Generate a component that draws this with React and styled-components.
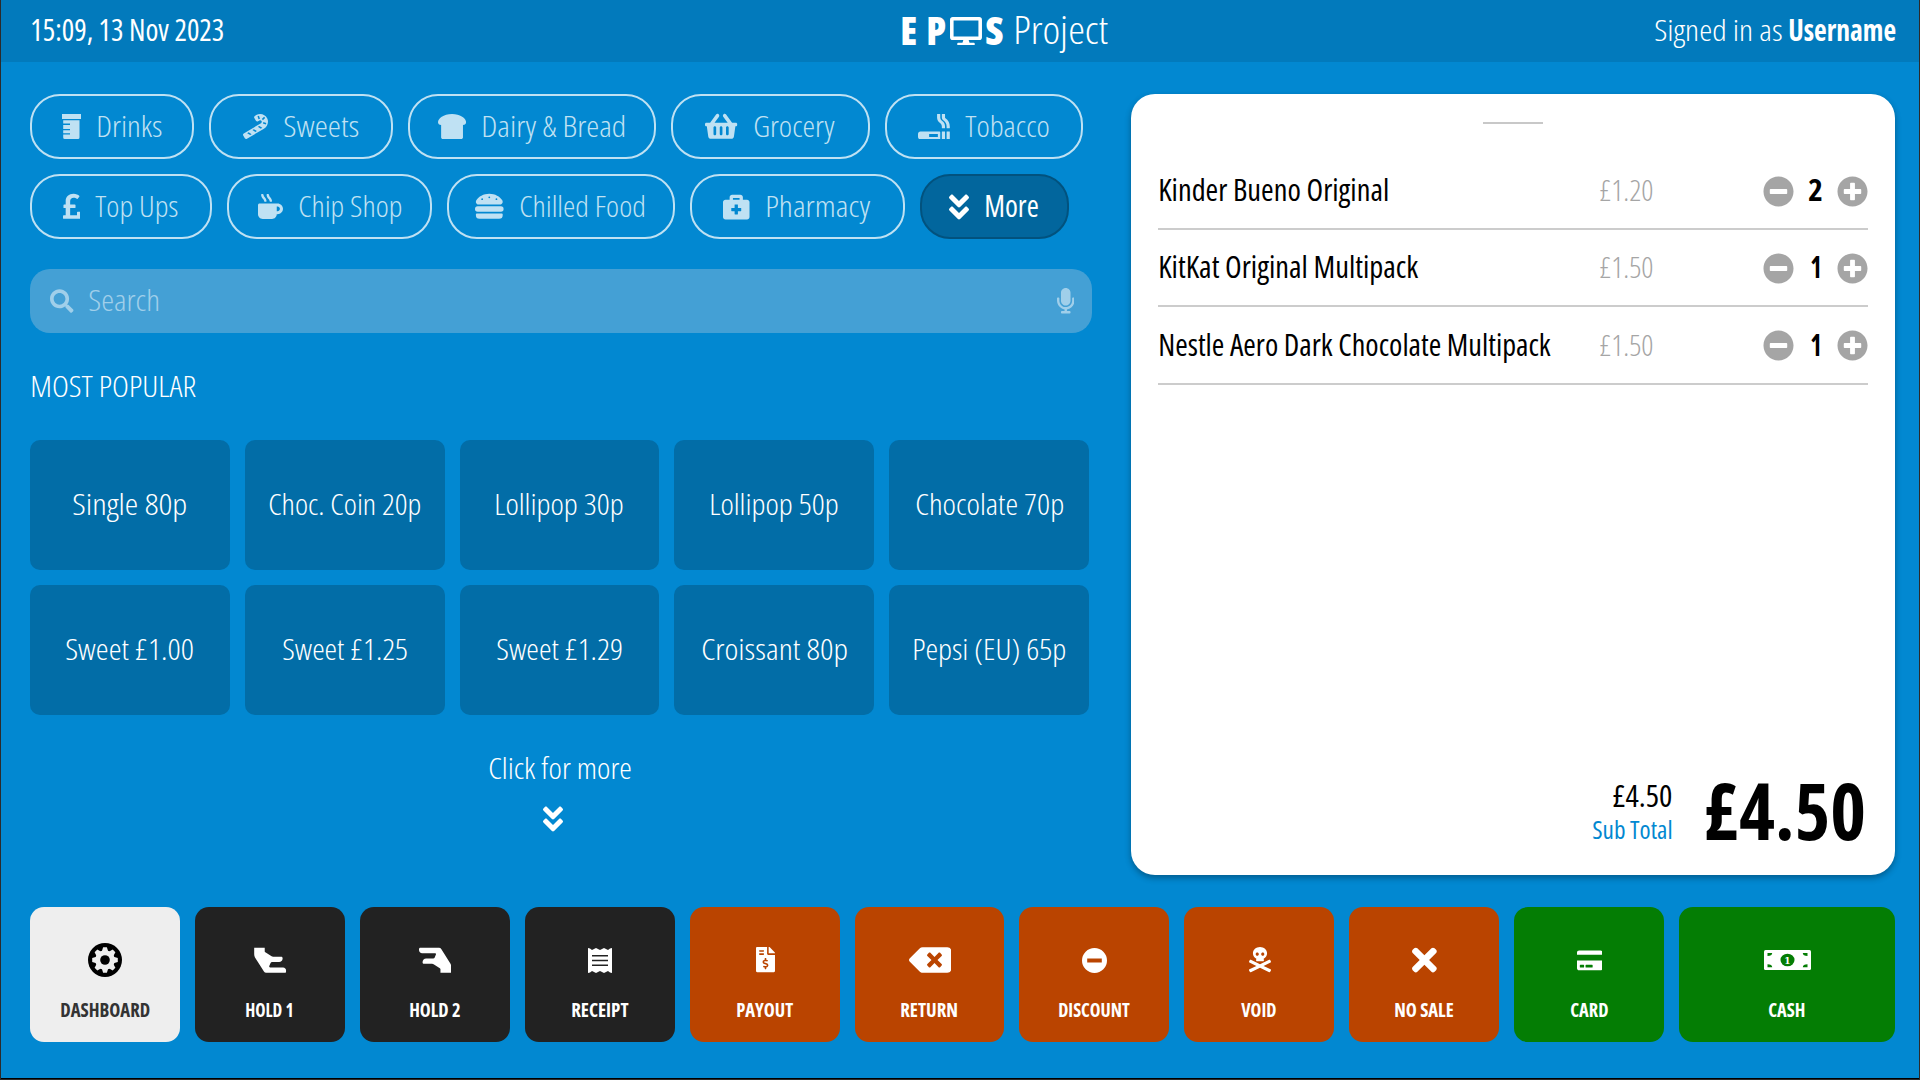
import React, { useLayoutEffect, useRef, useState } from "react";
import styled, { createGlobalStyle, css } from "styled-components";
import {
  FaCandyCane, FaBreadSlice, FaShoppingBasket, FaSmoking, FaPoundSign, FaMugHot,
  FaHamburger, FaBriefcaseMedical, FaAngleDoubleDown, FaMicrophone, FaDesktop,
  FaMinusCircle, FaPlusCircle, FaHandLizard, FaFileInvoiceDollar, FaBackspace,
  FaSkullCrossbones, FaTimes, FaCreditCard, FaSearch,
} from "react-icons/fa";

const GlobalStyle = createGlobalStyle`
  * { box-sizing: border-box; }
  body {
    margin: 0;
    overflow: hidden;
    background: #0288d1;
    font-family: "Open Sans", "Noto Sans", sans-serif;
    font-stretch: 75%;
  }
  button { font: inherit; font-stretch: inherit; color: inherit; }
`;

/* ---------- condensed text ---------- */

const TextBox = styled.span`
  display: inline-flex;
  flex: none;
  justify-content: flex-start;
  width: ${(p) => p.$w}px;
  height: ${(p) => p.$size * 1.2}px;
  line-height: ${(p) => p.$size * 1.2 - (p.$size > 20 ? 2 : 0)}px;
  font-size: ${(p) => p.$size}px;
  font-weight: ${(p) => p.$weight};
  color: ${(p) => p.$color || "inherit"};
  white-space: nowrap;
`;

const TextRun = styled.span`
  flex: none;
  transform-origin: 0 50%;
`;

function Text({ w, size = 30, weight = 300, color, children }) {
  const run = useRef(null);
  const [scale, setScale] = useState(1);
  const bleed = 0.8;
  useLayoutEffect(() => {
    const fit = () => {
      if (run.current) setScale((w + bleed * 2) / run.current.offsetWidth);
    };
    fit();
    document.fonts.ready.then(fit);
  }, [w, children]);
  return (
    <TextBox $w={w} $size={size} $weight={weight} $color={color}>
      <TextRun ref={run} style={{ transform: `translateX(${-bleed}px) scaleX(${scale})` }}>
        {children}
      </TextRun>
    </TextBox>
  );
}

/* ---------- icons ---------- */

const Glyph = styled.span`
  display: inline-flex;
  flex: none;
  align-items: center;
  svg {
    display: block;
    width: ${(p) => p.$w}px;
    height: ${(p) => p.$h}px;
    ${(p) => p.$flip && css`transform: rotate(180deg);`}
  }
`;

const Beaker = () => (
  <svg viewBox="0 0 19 25" fill="currentColor">
    <path d="M0 0h19v5H0z" />
    <path d="M1.2 6.2h16.3V23.5a1.5 1.5 0 0 1-1.5 1.5H2.7a1.5 1.5 0 0 1-1.5-1.5V20.6H8v-1.3H1.2v-3H8V15H1.2v-4H8V9.6H1.2z" />
  </svg>
);

const TEETH = [0, 45, 90, 135, 180, 225, 270, 315];
const Gear = () => (
  <svg viewBox="-17 -17 34 34">
    <circle r="17" fill="#000" />
    <g fill="#eee">
      <circle r="9.8" />
      {TEETH.map((a) => (
        <path key={a} transform={`rotate(${a})`} d="M-3.2 -8.5L-1.9 -12.8H1.9L3.2 -8.5z" />
      ))}
    </g>
    <circle r="4.8" fill="#000" />
  </svg>
);

const Receipt = () => (
  <svg viewBox="0 0 24 25" fill="currentColor">
    <path
      fillRule="evenodd"
      d="M0 0l2 .6L4 2l4-2 4 2 4-2 4 2 2-1.4L24 0v25l-2-.6L20 23l-4 2-4-2-4 2-4-2-2 1.4L0 25zM4 7v1.5h16V7zM4 11.7v1.5h16v-1.5zM4 16.4v1.5h16v-1.5z"
    />
  </svg>
);

const Remove = () => (
  <svg viewBox="0 0 25 25" fill="currentColor">
    <path fillRule="evenodd" d="M12.5 0a12.5 12.5 0 1 0 0 25a12.5 12.5 0 0 0 0-25zM5.2 10.5h14.6v4H5.2z" />
  </svg>
);

const Banknote = () => (
  <svg viewBox="0 0 47 20">
    <rect width="47" height="20" rx="1.5" fill="currentColor" />
    <g fill="#047d04">
      <path d="M3.5 3H8.2A4.7 3 0 0 1 3.5 6z" />
      <path d="M43.5 3H38.8A4.7 3 0 0 0 43.5 6z" />
      <path d="M3.5 17.3H8.2A4.7 3 0 0 0 3.5 14.3z" />
      <path d="M43.5 17.3H38.8A4.7 3 0 0 1 43.5 14.3z" />
      <ellipse cx="23.5" cy="10" rx="7" ry="6.3" />
    </g>
    <text x="23.5" y="13.7" textAnchor="middle" fontFamily="DejaVu Serif" fontWeight="700" fontSize="10" fill="currentColor">
      1
    </text>
  </svg>
);

/* ---------- page ---------- */

const Screen = styled.div`
  width: 1920px;
  height: 1080px;
  display: flex;
  flex-direction: column;
  background: #0288d1;
  color: #fff;
  border: solid #2b2b2b;
  border-width: 0 1px 1px;
  box-shadow: inset 0 -1px 0 #000;
`;

const Header = styled.header`
  flex: none;
  height: 62px;
  padding: 0 24px 0 30px;
  display: grid;
  grid-template-columns: 870px 1fr auto;
  align-items: center;
  background: #027abc;
`;

const Brand = styled.div`
  display: flex;
  align-items: center;
`;

const BrandMark = styled.div`
  display: flex;
  align-items: center;
  gap: ${(p) => p.$gap}px;
  margin-right: ${(p) => p.$end}px;
`;

const User = styled.div`
  display: flex;
  gap: 7px;
`;

const Main = styled.main`
  flex: none;
  display: grid;
  grid-template-columns: 1062px 764px;
  justify-content: space-between;
  height: 813px;
  padding: 32px 24px 0 29px;
`;

const Catalogue = styled.section`
  display: flex;
  flex-direction: column;
`;

const CategoryRow = styled.div`
  display: flex;
  gap: 15px;
  margin-bottom: 15px;
`;

const Category = styled.button`
  display: flex;
  align-items: center;
  justify-content: center;
  gap: 16px;
  width: ${(p) => p.$w}px;
  height: 65px;
  padding: 0 1px 0 0;
  border: 2px solid ${(p) => (p.$active ? "#02527e" : "#bfe1f3")};
  border-radius: 30px;
  background: ${(p) => (p.$active ? "#02669d" : "transparent")};
  color: ${(p) => (p.$active ? "#fff" : "#bfe1f3")};
`;

const SearchBar = styled.div`
  display: flex;
  align-items: center;
  gap: 15px;
  height: 64px;
  margin-top: 15px;
  padding: 0 18px 0 20px;
  border-radius: 20px;
  background: #44a0d5;
  color: #a0cfea;
`;

const Spacer = styled.span`
  flex: 1;
`;

const SectionTitle = styled.div`
  display: flex;
  margin: 36px 0 0 1px;
  height: 36px;
`;

const TileGrid = styled.div`
  display: grid;
  grid-template-columns: repeat(5, 1fr);
  grid-auto-rows: 130px;
  gap: 15px;
  width: 1059px;
  margin-top: 35px;
`;

const Tile = styled.button`
  display: flex;
  align-items: center;
  justify-content: center;
  padding: 0;
  border: 0;
  border-radius: 10px;
  background: #026da7;
`;

const MoreLink = styled.div`
  display: flex;
  flex-direction: column;
  align-items: center;
  gap: 16px;
  width: 1059px;
  margin-top: 36px;
`;

const MoreArrow = styled.span`
  display: flex;
  margin-right: 14px;
`;

const Basket = styled.section`
  display: flex;
  flex-direction: column;
  padding: 28px 27px 26px;
  border-radius: 24px;
  background: #fff;
  color: #000;
  box-shadow: 0 3px 6px rgba(0, 0, 0, 0.32);
`;

const Handle = styled.div`
  align-self: center;
  width: 60px;
  height: 2px;
  margin-bottom: 28.4px;
  background: #c8c8c8;
`;

const Line = styled.div`
  display: grid;
  grid-template-columns: 441px 1fr auto;
  align-items: center;
  height: 77.4px;
  padding: 2px 0 0 1px;
  border-bottom: 2px solid #ccc;
`;

const Stepper = styled.div`
  display: flex;
  align-items: center;
  color: #a5a5a5;
`;

const Quantity = styled.span`
  display: flex;
  justify-content: center;
  width: 43px;
`;

const Totals = styled.div`
  display: flex;
  align-items: flex-end;
  justify-content: flex-end;
  gap: 32px;
  margin-top: auto;
  padding-right: 3px;
`;

const SubTotal = styled.div`
  display: flex;
  flex-direction: column;
  align-items: flex-end;
  padding-bottom: 4px;
`;

const GrandTotal = styled.div`
  display: flex;
  margin-bottom: -10px;
`;

const Actions = styled.footer`
  display: flex;
  gap: 15px;
  height: 135px;
  margin-top: 32px;
  padding: 0 24px 0 29px;
`;

const tones = {
  light: css`background: #eee; color: #333;`,
  dark: css`background: #222; color: #fff;`,
  orange: css`background: #ba4400; color: #fff;`,
  green: css`background: #047d04; color: #fff;`,
};

const Action = styled.button`
  flex: ${(p) => (p.$wide ? "0 0 216px" : "1 1 0")};
  display: flex;
  flex-direction: column;
  align-items: center;
  padding: 33px 0 0;
  border: 0;
  border-radius: 14px;
  ${(p) => tones[p.$tone]}
`;

const ActionIcon = styled.span`
  display: flex;
  align-items: center;
  height: 40px;
  margin-bottom: 18px;
  padding-left: 1px;
`;

const categories = [
  [
    { label: "Drinks", w: 164, tw: 65, Icon: Beaker, iw: 19, h: 25 },
    { label: "Sweets", w: 184, tw: 75, Icon: FaCandyCane, iw: 25, h: 25 },
    { label: "Dairy & Bread", w: 247.5, tw: 143, Icon: FaBreadSlice, iw: 28.1, h: 25 },
    { label: "Grocery", w: 199, tw: 80, Icon: FaShoppingBasket, iw: 32.2, h: 28.6 },
    { label: "Tobacco", w: 198.5, tw: 83, Icon: FaSmoking, iw: 31.8, h: 25.5 },
  ],
  [
    { label: "Top Ups", w: 182, tw: 82, Icon: FaPoundSign, iw: 17.9, h: 28.6 },
    { label: "Chip Shop", w: 205, tw: 102, Icon: FaMugHot, iw: 25, h: 25 },
    { label: "Chilled Food", w: 227.5, tw: 125, Icon: FaHamburger, iw: 28.6, h: 28.6 },
    { label: "Pharmacy", w: 215, tw: 104, Icon: FaBriefcaseMedical, iw: 26.5, h: 26.5 },
    { label: "More", w: 149.5, tw: 53, Icon: FaAngleDoubleDown, iw: 20, h: 32, active: true },
  ],
];

const tiles = [
  ["Single 80p", 113], ["Choc. Coin 20p", 151], ["Lollipop 30p", 128], ["Lollipop 50p", 128],
  ["Chocolate 70p", 147], ["Sweet £1.00", 127], ["Sweet £1.25", 124], ["Sweet £1.29", 125],
  ["Croissant 80p", 145], ["Pepsi (EU) 65p", 153],
];

const lines = [
  { name: "Kinder Bueno Original", w: 229, price: "£1.20", qty: "2", qw: 13 },
  { name: "KitKat Original Multipack", w: 258, price: "£1.50", qty: "1", qw: 10 },
  { name: "Nestle Aero Dark Chocolate Multipack", w: 391, price: "£1.50", qty: "1", qw: 10 },
];

const actions = [
  { label: "DASHBOARD", w: 88, tone: "light", Icon: Gear, iw: 34, h: 34 },
  { label: "HOLD 1", w: 47, tone: "dark", Icon: FaHandLizard, iw: 32.2, h: 28.6, flip: true },
  { label: "HOLD 2", w: 50, tone: "dark", Icon: FaHandLizard, iw: 32.2, h: 28.6 },
  { label: "RECEIPT", w: 56, tone: "dark", Icon: Receipt, iw: 24, h: 25 },
  { label: "PAYOUT", w: 55, tone: "orange", Icon: FaFileInvoiceDollar, iw: 19, h: 25.3 },
  { label: "RETURN", w: 56, tone: "orange", Icon: FaBackspace, iw: 42.5, h: 34 },
  { label: "DISCOUNT", w: 70, tone: "orange", Icon: Remove, iw: 25, h: 25 },
  { label: "VOID", w: 34, tone: "orange", Icon: FaSkullCrossbones, iw: 22, h: 25.3 },
  { label: "NO SALE", w: 58, tone: "orange", Icon: FaTimes, iw: 24.8, h: 36 },
  { label: "CARD", w: 37, tone: "green", Icon: FaCreditCard, iw: 25.6, h: 22.8 },
  { label: "CASH", w: 36, tone: "green", Icon: Banknote, iw: 47, h: 20, wide: true },
];

export default function App() {
  return (
    <>
      <GlobalStyle />
      <Screen>
        <Header>
          <Text w={193} weight={400}>15:09, 13 Nov 2023</Text>
          <Brand>
            <BrandMark $gap={11} $end={5}>
              <Text w={15} size={39} weight={800}>E</Text>
              <Text w={18} size={39} weight={800}>P</Text>
            </BrandMark>
            <BrandMark $gap={4} $end={11}>
              <Glyph $w={32} $h={28.4}><FaDesktop /></Glyph>
              <Text w={17} size={39} weight={800}>S</Text>
            </BrandMark>
            <Text w={93} size={38}>Project</Text>
          </Brand>
          <User>
            <Text w={127}>Signed in as</Text>
            <Text w={106} weight={700}>Username</Text>
          </User>
        </Header>

        <Main>
          <Catalogue>
            {categories.map((row, i) => (
              <CategoryRow key={i}>
                {row.map(({ label, w, tw, Icon, iw, h, active }) => (
                  <Category key={label} $w={w} $active={active}>
                    <Glyph $w={iw} $h={h}><Icon /></Glyph>
                    <Text w={tw} weight={active ? 400 : 300}>{label}</Text>
                  </Category>
                ))}
              </CategoryRow>
            ))}

            <SearchBar>
              <Glyph $w={23.5} $h={24}><FaSearch /></Glyph>
              <Text w={70}>Search</Text>
              <Spacer />
              <Glyph $w={17.5} $h={25.5}><FaMicrophone /></Glyph>
            </SearchBar>

            <SectionTitle>
              <Text w={164}>MOST POPULAR</Text>
            </SectionTitle>

            <TileGrid>
              {tiles.map(([label, w]) => (
                <Tile key={label}><Text w={w}>{label}</Text></Tile>
              ))}
            </TileGrid>

            <MoreLink>
              <Text w={142}>Click for more</Text>
              <MoreArrow><Glyph $w={20} $h={32}><FaAngleDoubleDown /></Glyph></MoreArrow>
            </MoreLink>
          </Catalogue>

          <Basket>
            <Handle />
            {lines.map(({ name, w, price, qty, qw }) => (
              <Line key={name}>
                <Text w={w} weight={400}>{name}</Text>
                <Text w={53} color="#a5a5a5">{price}</Text>
                <Stepper>
                  <Glyph $w={31} $h={31}><FaMinusCircle /></Glyph>
                  <Quantity><Text w={qw} weight={700} color="#000">{qty}</Text></Quantity>
                  <Glyph $w={31} $h={31}><FaPlusCircle /></Glyph>
                </Stepper>
              </Line>
            ))}
            <Totals>
              <SubTotal>
                <Text w={59} weight={400}>£4.50</Text>
                <Text w={79} size={25} weight={400} color="#0288d1">Sub Total</Text>
              </SubTotal>
              <GrandTotal>
                <Text w={161} size={78} weight={700}>£4.50</Text>
              </GrandTotal>
            </Totals>
          </Basket>
        </Main>

        <Actions>
          {actions.map(({ label, w, tone, Icon, iw, h, flip, wide }) => (
            <Action key={label} $tone={tone} $wide={wide}>
              <ActionIcon><Glyph $w={iw} $h={h} $flip={flip}><Icon /></Glyph></ActionIcon>
              <Text w={w} size={20} weight={700}>{label}</Text>
            </Action>
          ))}
        </Actions>
      </Screen>
    </>
  );
}
